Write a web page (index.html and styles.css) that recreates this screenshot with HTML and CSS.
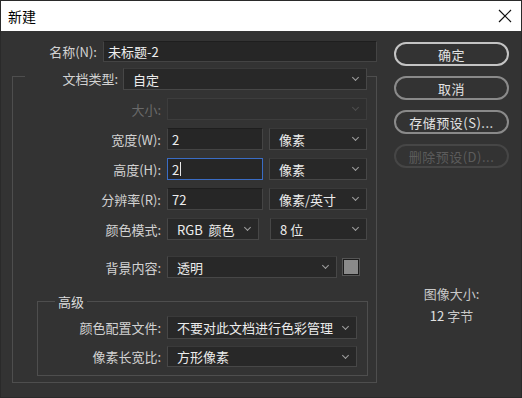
FILE: index.html
```html
<!DOCTYPE html>
<html lang="zh">

<head>
    <meta charset="UTF-8">
    <meta name="viewport" content="width=device-width, initial-scale=1.0">
    <title>新建</title>
    <link rel="stylesheet" href="styles.css">
</head>

<body>
    <div class="window">
        <div class="titlebar">
            <span class="title">新建</span>
            <svg class="close" width="14" height="14" viewBox="0 0 14 14">
                <path d="M1 1 L13 13 M13 1 L1 13" stroke="#111" stroke-width="1.2" fill="none" />
            </svg>
        </div>

        <div class="content">
            <div class="form">
                <div class="row name-row">
                    <span class="label name-label">名称(N):</span>
                    <div class="input name-input">未标题-2</div>
                </div>

                <fieldset class="group">
                    <legend class="group-head">
                        <span class="label head-label">文档类型:</span>
                        <div class="select head-select"><span>自定</span><i class="chev"></i></div>
                    </legend>

                    <div class="row first-row">
                        <span class="label off">大小:</span>
                        <div class="select size-select off"><span></span><i class="chev"></i></div>
                    </div>
                    <div class="row">
                        <span class="label">宽度(W):</span>
                        <div class="input num">2</div>
                        <div class="select unit"><span>像素</span><i class="chev"></i></div>
                    </div>
                    <div class="row">
                        <span class="label">高度(H):</span>
                        <div class="input num focus">2<span class="caret"></span></div>
                        <div class="select unit"><span>像素</span><i class="chev"></i></div>
                    </div>
                    <div class="row">
                        <span class="label">分辨率(R):</span>
                        <div class="input num">72</div>
                        <div class="select unit"><span>像素/英寸</span><i class="chev"></i></div>
                    </div>
                    <div class="row">
                        <span class="label">颜色模式:</span>
                        <div class="select mode"><span>RGB&nbsp; 颜色</span><i class="chev"></i></div>
                        <div class="select bits"><span>8 位</span><i class="chev"></i></div>
                    </div>
                    <div class="row bg-row">
                        <span class="label">背景内容:</span>
                        <div class="select bg-select"><span>透明</span><i class="chev"></i></div>
                        <div class="swatch"></div>
                    </div>

                    <fieldset class="advanced">
                        <legend class="adv-head">高级</legend>
                        <div class="row adv-row">
                            <span class="label adv-label">颜色配置文件:</span>
                            <div class="select adv-select"><span>不要对此文档进行色彩管理</span><i class="chev"></i></div>
                        </div>
                        <div class="row adv-row second">
                            <span class="label adv-label">像素长宽比:</span>
                            <div class="select adv-select"><span>方形像素</span><i class="chev"></i></div>
                        </div>
                    </fieldset>
                </fieldset>
            </div>

            <div class="side">
                <button class="btn primary">确定</button>
                <button class="btn">取消</button>
                <button class="btn">存储预设(S)...</button>
                <button class="btn off">删除预设(D)...</button>

                <div class="info">
                    <div>图像大小:</div>
                    <div><b>12</b> 字节</div>
                </div>
            </div>
        </div>
    </div>
</body>

</html>
```

FILE: styles.css
```css
body {
    margin: 0;
    font-family: "Noto Sans CJK SC", "Noto Sans", sans-serif;
    font-size: 13px;
}

.window {
    width: 522px;
    height: 398px;
    box-sizing: border-box;
    border: 1px solid #2a2a2a;
    background-color: #333333;
    display: flex;
    flex-direction: column;
}

.titlebar {
    height: 30px;
    background-color: #ffffff;
    display: flex;
    justify-content: space-between;
    align-items: center;
    padding: 0 9px 0 7px;
}

.title {
    font-size: 14px;
    color: #000000;
}

.content {
    display: flex;
    padding: 10px 0 0 11px;
}

.form {
    width: 365px;
}

.row {
    display: flex;
    align-items: center;
    gap: 6px;
    height: 22px;
    margin-top: 8px;
}

.label {
    width: 148px;
    text-align: right;
    color: #d2d2d2;
    white-space: nowrap;
}

.label.off {
    color: #6a6a6a;
}

.input {
    height: 100%;
    box-sizing: border-box;
    background-color: #262626;
    border: 1px solid #444444;
    border-top-color: #1e1e1e;
    color: #eeeeee;
    padding-left: 4px;
    display: flex;
    align-items: center;
}

.input.focus {
    border-color: #3a6cc4;
}

.caret {
    width: 1px;
    height: 14px;
    background-color: #e8e8e8;
    margin-left: 1px;
}

.select {
    height: 100%;
    box-sizing: border-box;
    background-color: #282828;
    border: 1px solid #474747;
    border-top-color: #3a3a3a;
    color: #ececec;
    padding: 0 8px 0 9px;
    display: flex;
    justify-content: space-between;
    align-items: center;
}

.select.off {
    background-color: #2f2f2f;
    border-color: #3d3d3d;
}

.chev {
    width: 4px;
    height: 4px;
    border-right: 1.5px solid #a0a0a0;
    border-bottom: 1.5px solid #a0a0a0;
    transform: rotate(45deg);
    margin-top: -3px;
}

.select.off .chev {
    border-color: #4f4f4f;
}

/* name row */
.name-row {
    margin-top: 0;
    height: 21px;
}

.name-label {
    width: 85px;
}

.name-input {
    flex: 1;
}

/* outer group */
.group {
    margin: 6px 0 0;
    padding: 0;
    min-width: 0;
    border: 1px solid #4e4e4e;
    width: 365px;
    box-sizing: border-box;
}

.group-head {
    display: flex;
    align-items: flex-start;
    gap: 5px;
    padding: 0;
    margin-left: 12px;
    height: 16px;
}

.head-label {
    width: 93px;
    line-height: 22px;
}

.head-select {
    width: 244px;
    height: 22px;
    flex-shrink: 0;
}

.first-row {
    margin-top: 14px;
}

.size-select {
    width: 200px;
}

.num {
    width: 96px;
}

.unit {
    width: 98px;
}

.mode {
    width: 92px;
}

.bits {
    width: 97px;
    margin-left: 5px;
}

.bg-row {
    margin-top: 16px;
}

.bg-select {
    width: 170px;
}

.swatch {
    width: 14px;
    height: 14px;
    background-color: #8a8a8a;
    border: 1px solid #1c1c1c;
    outline: 1px solid #555555;
}

/* advanced group */
.advanced {
    margin: 14px 8px 6px 24px;
    padding: 0 0 8px;
    min-width: 0;
    border: 1px solid #4e4e4e;
}

.adv-head {
    margin-left: 17px;
    padding: 0 3px;
    color: #dcdcdc;
}

.adv-row {
    margin-top: 5px;
    height: 23px;
}

.adv-row.second {
    margin-top: 7px;
    height: 21px;
}

.adv-label {
    width: 123px;
}

.adv-select {
    width: 190px;
}

/* buttons column */
.side {
    display: flex;
    flex-direction: column;
    gap: 10px;
    margin: 1px 0 0 17px;
    width: 115px;
}

.btn {
    height: 24px;
    border: 2px solid #8a8a8a;
    border-radius: 12px;
    background-color: transparent;
    color: #e2e2e2;
    font-family: inherit;
    font-size: 13px;
    letter-spacing: 0.5px;
    padding: 0;
}

.btn.primary {
    border-color: #c4c4c4;
}

.btn.off {
    border-color: #464646;
    color: #5c5c5c;
}

.info {
    margin-top: 105px;
    text-align: center;
    color: #c8c8c8;
    line-height: 22px;
}

.info b {
    font-weight: normal;
    color: #e0e0e0;
}
```
